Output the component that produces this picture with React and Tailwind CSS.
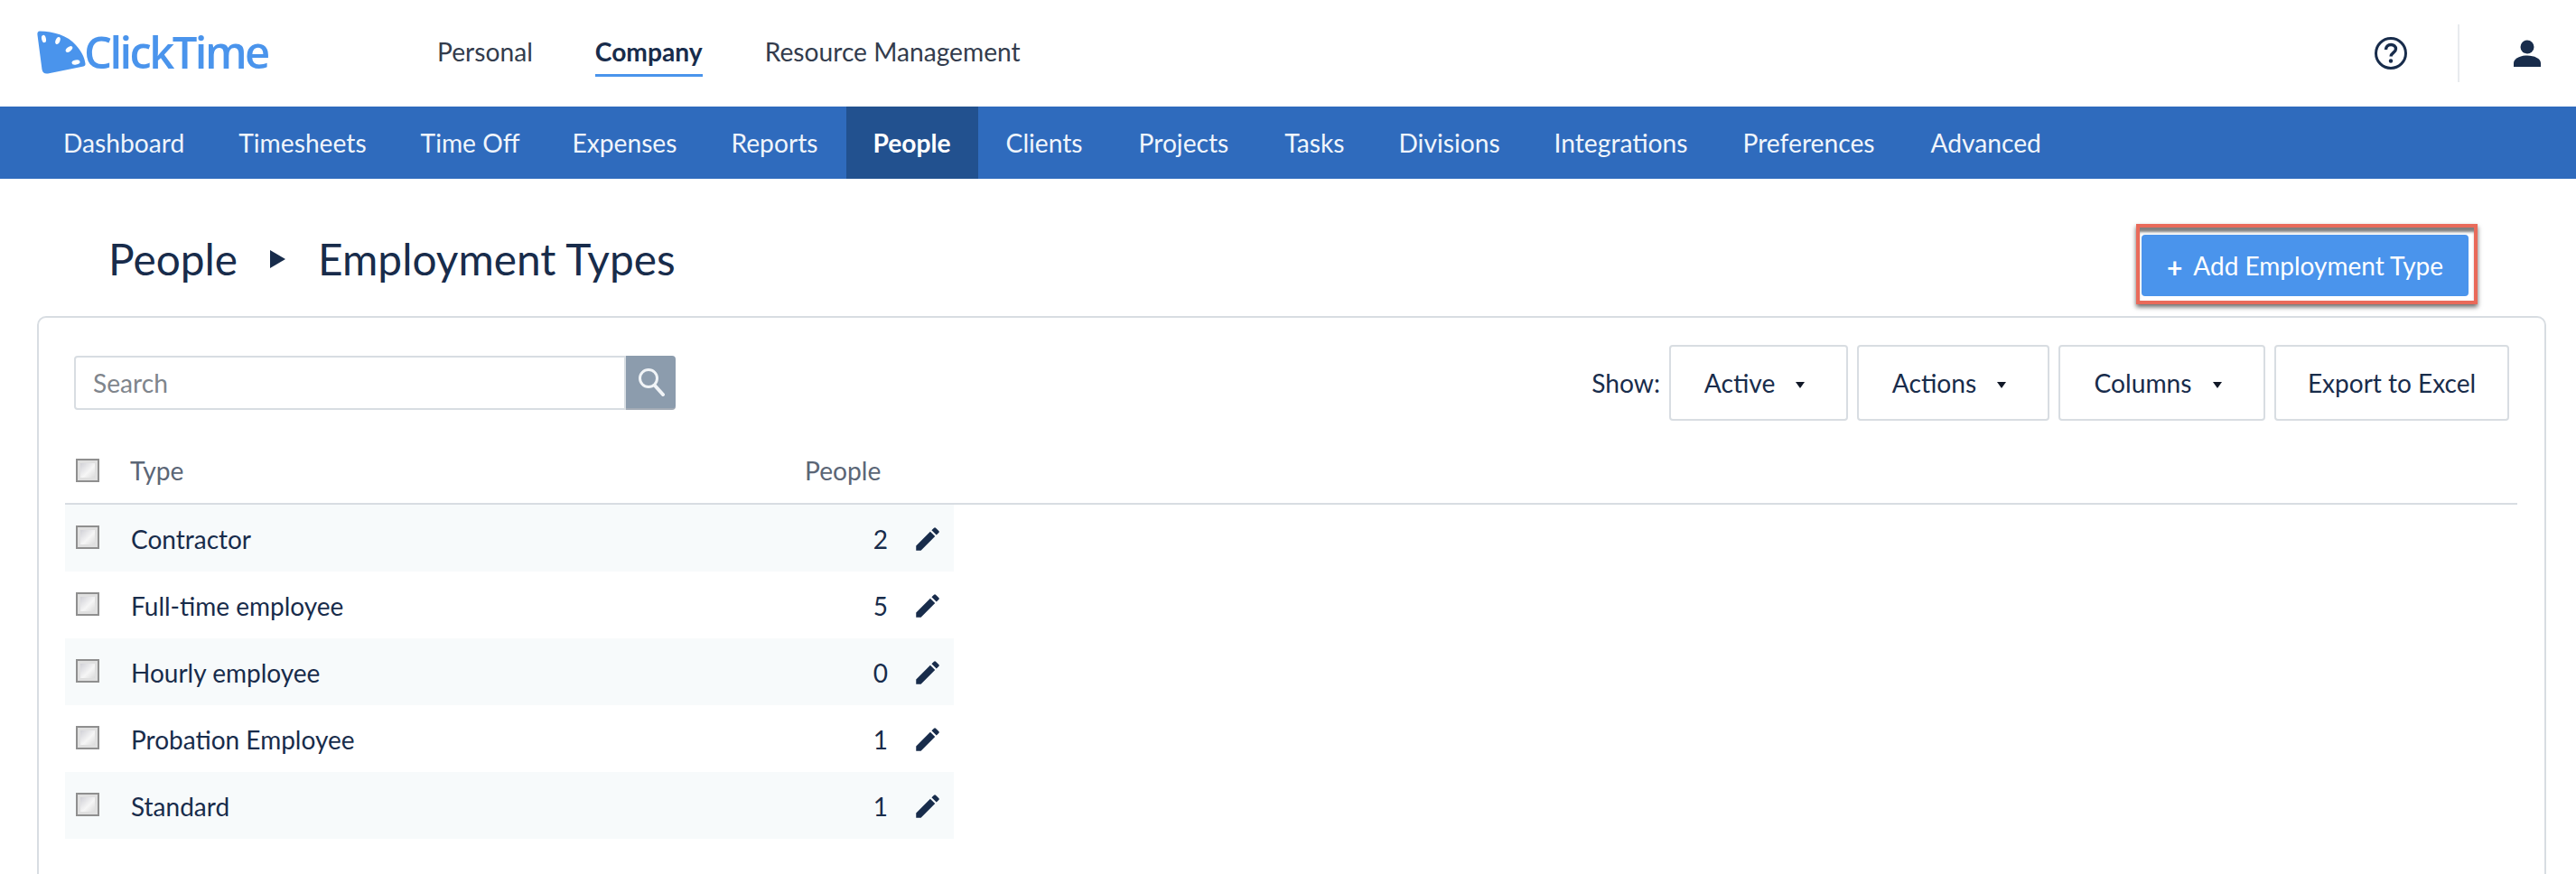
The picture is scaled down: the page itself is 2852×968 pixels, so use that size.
import React from "react";

const navItems = [
  ["Dashboard", ""],
  ["Timesheets", ""],
  ["Time Off", "pr-[28px]"],
  ["Expenses", ""],
  ["Reports", "pr-[32px]"],
  ["People", "pl-[29px] pr-[30px] bg-[#22518f] font-bold"],
  ["Clients", "pl-[31px] pr-[32px]"],
  ["Projects", "pr-[32px]"],
  ["Tasks", ""],
  ["Divisions", ""],
  ["Integrations", "pr-[31px]"],
  ["Preferences", "pr-[32px]"],
  ["Advanced", ""],
];
const rows = [["Contractor",2,true],["Full-time employee",5,false],["Hourly employee",0,true],["Probation Employee",1,false],["Standard",1,true]];

function Check() {
  return <input type="checkbox" className="appearance-none block w-[26px] h-[26px] border-2 border-[#8f8f8f] bg-[linear-gradient(135deg,#c4c4cc,#f6f6f6_55%,#d0d0d0)] shadow-[inset_0_0_0_3px_#e0e0e0] shrink-0" />;
}

function Caret() {
  return <span className="ml-[23px] inline-block w-0 h-0 border-l-[5.5px] border-r-[5.5px] border-t-[7px] border-l-transparent border-r-transparent border-t-[#111827] translate-y-[2px]" />;
}

function Pencil() {
  return (
    <svg viewBox="0 0 24 24" className="w-[34px] h-[34px] text-[#182c4b]" fill="currentColor">
      <path d="M3 17.25V21h3.75L17.81 9.94l-3.75-3.75L3 17.25zM20.71 7.04a1 1 0 0 0 0-1.41l-2.34-2.34a1 1 0 0 0-1.41 0l-1.83 1.83 3.75 3.75 1.83-1.83z" />
    </svg>
  );
}

function DropBtn({ label, w }) {
  return (
    <button className={`h-[84px] ${w} pr-[9px] flex items-center justify-center bg-white border-2 border-[#d8dde2] rounded-[4px] text-[#182c4b]`}>
      <span>{label}</span><Caret />
    </button>
  );
}

export default function App() {
  return (
    <div className="w-[2852px] h-[968px] overflow-hidden bg-white font-['Lato','Liberation_Sans',sans-serif] text-[28.2px] text-[#182c4b]">
      <header className="h-[118px] flex items-center">
        <div className="flex items-center ml-[41px] w-[443px]">
          <svg viewBox="0 0 54 48" className="w-[54px] h-[48px] text-[#4a94ec] shrink-0 -translate-y-[1px]">
            <path fill="currentColor" d="M3 0.5C18 1 34 5 43 16 49 23 52.5 29 53.5 36.5 53.7 38 53 39 51.5 39.5L12 47.5C8.5 48 6.5 47 5.5 43L0.5 5C0 2 1 0.5 3 0.5Z" />
            <g fill="#fff">
              <ellipse cx="7.5" cy="9" rx="2.4" ry="4.2" transform="rotate(-12 7.5 9)" />
              <ellipse cx="23" cy="11" rx="2.4" ry="4.2" transform="rotate(22 23 11)" />
              <ellipse cx="35.5" cy="20.5" rx="2.4" ry="4.4" transform="rotate(52 35.5 20.5)" />
              <ellipse cx="43" cy="35" rx="4.6" ry="2.5" transform="rotate(-10 43 35)" />
            </g>
          </svg>
          <span className="text-[#4a94ec] text-[49px] leading-none font-semibold font-['Open_Sans',sans-serif] tracking-[-2.6px] -ml-[2px] -translate-y-[2px]">ClickTime</span>
        </div>
        <nav className="flex items-center gap-[69px] mb-[3px] text-[#333c4d]">
          <span>Personal</span>
          <span className="relative font-bold text-[#182c4b]">Company<span className="absolute left-0 right-0 top-[46px] h-[3px] bg-[#4a94ec]" /></span>
          <span>Resource Management</span>
        </nav>
        <div className="ml-auto flex items-center">
          <svg viewBox="0 0 36 36" className="w-[36px] h-[36px] mr-[56px]" fill="none" stroke="#182c4b" strokeWidth="3">
            <circle cx="18" cy="18" r="16.5" />
            <path d="M12.5 14c0-3.4 2.4-5.500 5.600-5.500 3.200 0 5.400 2 5.400 4.700 0 4-5.400 4.300-5.400 8.300" strokeWidth="3.400" />
            <circle cx="18" cy="26.500" r="2.200" fill="#182c4b" stroke="none" />
          </svg>
          <div className="w-[2px] h-[64px] bg-[#e8ebee] mr-[60px]" />
          <svg viewBox="0 0 30 30" className="w-[30px] h-[30px] mr-[39px]" fill="#182c4b">
            <circle cx="15" cy="8" r="7.500" />
            <path d="M0 30v-4c0-5 7-8.500 15-8.500S30 21 30 26v4z" />
          </svg>
        </div>
      </header>

      <nav className="h-[80px] bg-[#2f6bbd] flex items-stretch pl-[40px] text-white">
        {navItems.map(([n, c]) => (
          <span key={n} className={`flex items-center px-[30px] ${c} ${n === "People" ? "" : "text-[#f0f5fb]"}`}>{n}</span>
        ))}
      </nav>

      <div className="h-[154px] flex items-start justify-between pl-[120px] pr-[109px]">
        <div className="flex items-center h-[97px] mt-[40px] text-[47.8px] leading-none gap-[36px]">
          <span>People</span>
          <span className="w-0 h-0 border-l-[17px] border-y-[10.5px] border-l-[#182c4b] border-y-transparent" />
          <span>Employment Types</span>
        </div>
        <div className="mt-[50px] w-[378px] h-[89px] border-[4px] border-[#e96a5a] shadow-[0_3px_5px_rgba(0,0,0,0.6),inset_0_6px_3px_-1px_rgba(0,0,0,0.5)] p-[2px] pt-[8px]">
          <button className="w-[362px] h-[68px] bg-[#4a94ec] rounded-[4px] text-white text-[28px] flex items-center justify-center">
            <span className="mr-[12px] text-[30px] font-bold leading-none translate-y-[2px]">+</span>Add Employment Type
          </button>
        </div>
      </div>

      <main className="ml-[41px] w-[2778px] h-[800px] border-2 border-[#d8dde2] rounded-[10px] pl-[29px] pr-[29px] -mt-[2px]">
        <div className="flex justify-between items-start pt-[30px] h-[128px]">
          <div className="flex mt-[12px] ml-[10px] h-[60px] w-[666px]">
            <input placeholder="Search" className="flex-1 min-w-0 border-2 border-[#d8dde2] rounded-l-[4px] pl-[19px] outline-none placeholder:text-[#7f858c]" />
            <div className="w-[55px] bg-[#8c9cad] rounded-r-[4px] flex items-center justify-center border-b-2 border-[#a3abb5]">
              <svg viewBox="0 0 30 32" className="w-[30px] h-[32px]" fill="none" stroke="#f1f4f7" strokeWidth="3" strokeLinecap="round">
                <circle cx="12" cy="12" r="9.500" />
                <path d="M19 20l9 10" strokeWidth="4" />
              </svg>
            </div>
          </div>
          <div className="flex items-center gap-[10px] mr-[10px]">
            <span>Show:</span>
            <DropBtn label="Active" w="w-[198px]" />
            <DropBtn label="Actions" w="w-[213px]" />
            <DropBtn label="Columns" w="w-[229px]" />
            <button className="h-[84px] w-[260px] bg-white border-2 border-[#d8dde2] rounded-[4px] text-[28px]">Export to Excel</button>
          </div>
        </div>

        <div className="h-[79px] pt-[5px] flex items-center border-b-2 border-[#d8dde2] w-[2715px] text-[#5b6676] pl-[12px]">
          <Check />
          <span className="ml-[34px] w-[747px]">Type</span>
          <span>People</span>
        </div>
        {rows.map(([name, n, shade]) => (
          <div key={name} className={`h-[74px] pt-[2px] w-[984px] flex items-center pl-[12px] text-[28px] ${shade ? "bg-[#f7fafb]" : ""}`}>
            <span className="-translate-y-[2px]"><Check /></span>
            <span className="ml-[35px] flex-1">{name}</span>
            <span className="w-[24px] text-right">{n}</span>
            <span className="ml-[27px] mr-[12px]"><Pencil /></span>
          </div>
        ))}
      </main>
    </div>
  );
}
